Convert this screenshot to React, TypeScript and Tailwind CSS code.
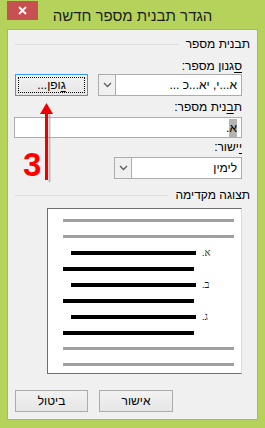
import React from 'react'

const font = { fontFamily: '"Liberation Sans", "DejaVu Sans", sans-serif' }

function Chevron() {
  return (
    <svg width="9" height="6" viewBox="0 0 9 6">
      <polyline points="1,1 4.5,4.5 8,1" fill="none" stroke="#606060" strokeWidth="1.4" />
    </svg>
  )
}

function Combo({ text, className }: { text: string; className: string }) {
  return (
    <div className={`flex h-[22px] border border-[#acacac] bg-white ${className}`}>
      <div className="flex w-[17px] items-center justify-center border-r border-[#acacac] bg-[#f0f0f0]">
        <Chevron />
      </div>
      <div dir="rtl" className="flex-1 pr-[4px] text-[12px] leading-[20px] text-black">
        {text}
      </div>
    </div>
  )
}

function GroupHeader({ title }: { title: string }) {
  return (
    <div className="flex h-[15px] items-center gap-[7px]">
      <div className="h-px flex-1 bg-[#dcdcdc]" />
      <div dir="rtl" className="text-[12px] leading-[15px] text-black">{title}</div>
    </div>
  )
}

function Bar({ kind }: { kind: 'gray' | 'full' | string }) {
  if (kind === 'gray') {
    return (
      <div className="flex h-[16px] items-start">
        <div className="ml-[15px] h-[3px] w-[171px] bg-[#a0a0a0]" />
      </div>
    )
  }
  if (kind === 'full') {
    return (
      <div className="flex h-[16px] items-start">
        <div className="ml-[15px] h-[4px] w-[131px] bg-black" />
      </div>
    )
  }
  return (
    <div className="flex h-[16px] items-start">
      <div className="flex h-[4px] items-center gap-[6px]">
        <div className="ml-[23px] h-[4px] w-[125px] bg-black" />
        <span dir="rtl" className="text-[10px] leading-none text-[#222]" style={{ fontFamily: '"Liberation Serif", serif' }}>
          {kind}
        </span>
      </div>
    </div>
  )
}

export default function App() {
  const rows = ['gray', 'gray', 'א.', 'full', 'ב.', 'full', 'ג.', 'full', 'gray', 'gray']

  return (
    <div className="relative h-[428px] w-[265px] overflow-hidden bg-[#b5d35a]" style={font}>
      {/* title bar */}
      <div className="grid h-[29px] grid-cols-[38px_1fr_38px]">
        <div className="pl-[7px] pt-px">
          <div className="flex h-[19px] w-[31px] items-center justify-center bg-[#c75050]">
            <svg width="9" height="9" viewBox="0 0 9 9">
              <path d="M1 1 L8 8 M8 1 L1 8" stroke="white" strokeWidth="1.8" />
            </svg>
          </div>
        </div>
        <div dir="rtl" className="pt-[7px] text-center text-[15px] leading-[18px] text-[#1e1e1e]">
          הגדר תבנית מספר חדשה
        </div>
        <div />
      </div>

      {/* client area */}
      <div className="mx-[7px] flex h-[391px] flex-col border border-[#a3bf4e] bg-[#f0f0f0] px-[7px] pt-[7px]">
        <GroupHeader title="תבנית מספר" />

        <div dir="rtl" className="mt-[7px] mr-[8px] h-[15px] text-[12px] leading-[15px] text-black">
          <u className="underline-offset-2">ס</u>גנון מספר:
        </div>
        <div className="flex h-[22px] gap-[10px]">
          <div className="relative flex h-[22px] w-[73px] items-center justify-center border border-[#3399ff] bg-gradient-to-b from-[#f2f2f2] to-[#e6e6e6]">
            <div className="absolute inset-[2px] border border-dotted border-black" />
            <span dir="rtl" className="text-[12px] leading-none text-black">
              <u className="underline-offset-2">ג</u>ופן...
            </span>
          </div>
          <Combo text="א...י, יא...כ ..." className="w-[144px]" />
        </div>

        <div dir="rtl" className="mt-[4px] mr-[8px] h-[15px] text-[12px] leading-[15px] text-black">
          ת<u className="underline-offset-2">ב</u>נית מספר:
        </div>
        <div dir="rtl" className="mt-[2px] -ml-px flex h-[21px] w-[228px] items-center border border-[#acacac] bg-white pr-[4px] text-[12px] text-black">
          <span className="bg-[#b4b4b4]">א</span>.
        </div>

        <div dir="rtl" className="mt-[2px] mr-[8px] h-[15px] text-[12px] leading-[15px] text-black">
          <u className="underline-offset-2">י</u>ישור:
        </div>
        <div className="mt-[2px] flex justify-end pr-[8px]">
          <Combo text="לימין" className="h-[21px] w-[128px]" />
        </div>

        <div className="mt-[9px]">
          <GroupHeader title="תצוגה מקדימה" />
        </div>

        <div className="mt-[5px] ml-[32px] h-[166px] w-[195px] border border-[#6e6e6e] border-r-[#dadada] bg-white pt-[10px]">
          {rows.map((r, i) => (
            <Bar key={i} kind={r} />
          ))}
        </div>

        <div className="mt-[16px] flex gap-[11px]">
          <div dir="rtl" className="flex h-[22px] w-[73px] items-center justify-center border border-[#acacac] bg-gradient-to-b from-[#f2f2f2] to-[#e6e6e6] text-[12px] text-black">
            ביטול
          </div>
          <div dir="rtl" className="flex h-[22px] w-[74px] items-center justify-center border border-[#acacac] bg-gradient-to-b from-[#f2f2f2] to-[#e6e6e6] text-[12px] text-black">
            אישור
          </div>
        </div>
      </div>

      {/* annotation overlay */}
      <svg className="absolute left-0 top-0" width="265" height="428">
        <line x1="49.5" y1="114" x2="49.5" y2="182" stroke="#9a9a9a" strokeWidth="2" opacity="0.6" />
        <line x1="46.5" y1="110" x2="46.5" y2="180" stroke="#ee0000" strokeWidth="3" />
        <polygon points="40,114 46.5,103 53,114" fill="#ee0000" />
      </svg>
      <div className="absolute left-[23px] top-[148px] text-[33px] font-bold leading-none text-[#ff0000]">3</div>
    </div>
  )
}
